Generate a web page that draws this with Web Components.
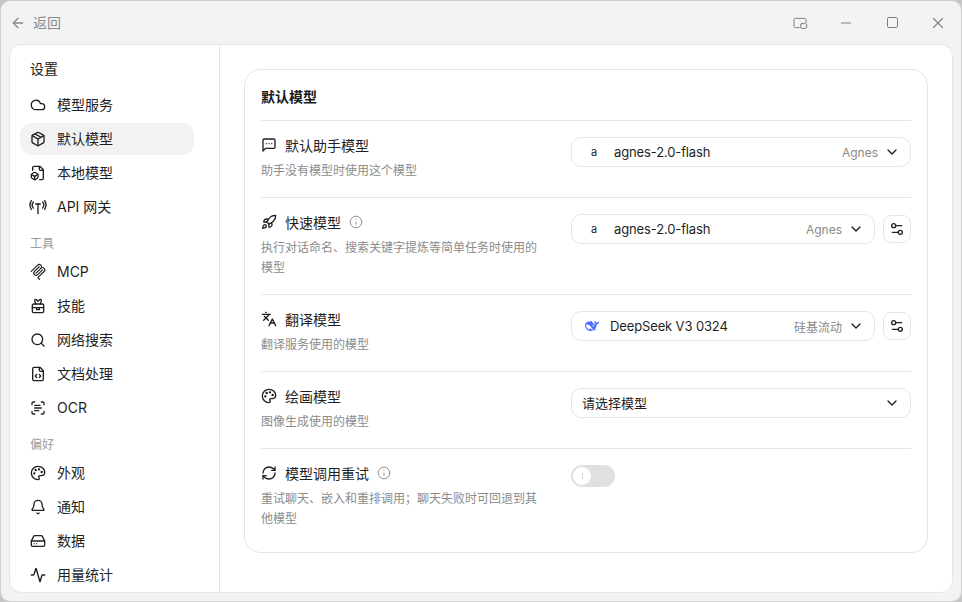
<!DOCTYPE html>
<html lang="zh"><head><meta charset="utf-8"><title>设置</title>
<style>
html,body{margin:0;height:100%;background:#c6c6c6;overflow:hidden}
body{font-family:Inter,"Noto Sans CJK SC",sans-serif;color:#1a1a1a;font-size:14px}
</style></head><body>
<app-window>
  <title-bar slot="title"></title-bar>
  <settings-nav slot="nav">
    <nav-heading first>设置</nav-heading>
    <nav-item icon="cloud">模型服务</nav-item>
    <nav-item icon="package" active>默认模型</nav-item>
    <nav-item icon="filebox">本地模型</nav-item>
    <nav-item icon="antenna">API 网关</nav-item>
    <nav-heading>工具</nav-heading>
    <nav-item icon="mcp">MCP</nav-item>
    <nav-item icon="skill">技能</nav-item>
    <nav-item icon="search">网络搜索</nav-item>
    <nav-item icon="filecode">文档处理</nav-item>
    <nav-item icon="scan">OCR</nav-item>
    <nav-heading>偏好</nav-heading>
    <nav-item icon="palette">外观</nav-item>
    <nav-item icon="bell">通知</nav-item>
    <nav-item icon="drive">数据</nav-item>
    <nav-item icon="activity">用量统计</nav-item>
  </settings-nav>
  <settings-card heading="默认模型">
    <setting-row icon="message" label="默认助手模型" desc="助手没有模型时使用这个模型">
      <model-select mark="a" model="agnes-2.0-flash" provider="Agnes"></model-select>
    </setting-row>
    <setting-row icon="rocket" label="快速模型" info desc="执行对话命名、搜索关键字提炼等简单任务时使用的模型">
      <model-select mark="a" model="agnes-2.0-flash" provider="Agnes"></model-select>
      <tune-button></tune-button>
    </setting-row>
    <setting-row icon="languages" label="翻译模型" desc="翻译服务使用的模型">
      <model-select mark="deepseek" model="DeepSeek V3 0324" provider="硅基流动"></model-select>
      <tune-button></tune-button>
    </setting-row>
    <setting-row icon="palette" label="绘画模型" desc="图像生成使用的模型">
      <model-select placeholder="请选择模型"></model-select>
    </setting-row>
    <setting-row icon="refresh" label="模型调用重试" info desc="重试聊天、嵌入和重排调用；聊天失败时可回退到其他模型">
      <toggle-switch></toggle-switch>
    </setting-row>
  </settings-card>
</app-window>
<script>
const ICONS={
cloud:'<path d="M17.5 19H9a7 7 0 1 1 6.71-9h1.79a4.5 4.5 0 1 1 0 9Z"/>',
package:'<path d="M21 8a2 2 0 0 0-1-1.73l-7-4a2 2 0 0 0-2 0l-7 4A2 2 0 0 0 3 8v8a2 2 0 0 0 1 1.73l7 4a2 2 0 0 0 2 0l7-4A2 2 0 0 0 21 16Z"/><path d="m3.3 7 8.7 5 8.7-5"/><path d="M12 22V12"/><path d="m7.5 4.27 9 5.15"/>',
filebox:'<path d="M14.5 22H18a2 2 0 0 0 2-2V7l-5-5H6a2 2 0 0 0-2 2v4"/><path d="M14 2v4a2 2 0 0 0 2 2h4"/><path d="M3 13.1a2 2 0 0 0-1 1.76v3.24a2 2 0 0 0 .97 1.78L6 21.7a2 2 0 0 0 2.03.01L11 19.9a2 2 0 0 0 1-1.76V14.9a2 2 0 0 0-.97-1.78L8 11.3a2 2 0 0 0-2.03-.01Z"/><path d="M7 17v5"/><path d="M11.7 14.2 7 17l-4.7-2.8"/>',
antenna:'<path d="M5 4.5C3 7 3 11 5 13.5"/><path d="M2 2.5C-.5 6.5-.5 11.500 2 15.500"/><path d="M19 4.500c2 2.500 2 6.500 0 9"/><path d="M22 2.500c2.500 4 2.500 9 0 13"/><path d="M8.500 7.500h7"/><path d="M12 7.500V22"/>',
skill:'<path d="M3.500 11a2 2 0 0 1 2-2h13a2 2 0 0 1 2 2v9a2 2 0 0 1-2 2h-13a2 2 0 0 1-2-2z"/><path d="M8.500 9 7 4a1.500 1.500 0 0 1 2.300-1.600L12 5l2.700-2.600A1.500 1.500 0 0 1 17 4l-1.500 5"/><path d="M3.500 14.500h17"/><path d="M10 14.500v3h4v-3"/>',
search:'<circle cx="11" cy="11" r="8"/><path d="m21 21-4.300-4.300"/>',
filecode:'<path d="M10 12.500 8 15l2 2.500"/><path d="m14 12.500 2 2.500-2 2.500"/><path d="M14 2v4a2 2 0 0 0 2 2h4"/><path d="M15 2H6a2 2 0 0 0-2 2v16a2 2 0 0 0 2 2h12a2 2 0 0 0 2-2V7z"/>',
scan:'<path d="M3 7V5a2 2 0 0 1 2-2h2"/><path d="M17 3h2a2 2 0 0 1 2 2v2"/><path d="M21 17v2a2 2 0 0 1-2 2h-2"/><path d="M7 21H5a2 2 0 0 1-2-2v-2"/><path d="M7 8h8"/><path d="M7 12h10"/><path d="M7 16h6"/>',
palette:'<path d="M12 22a1 1 0 0 1 0-20 10 9 0 0 1 10 9 5 5 0 0 1-5 5h-2.250a1.750 1.750 0 0 0-1.400 2.800l.3.4a1.750 1.750 0 0 1-1.400 2.800z"/><circle cx="13.500" cy="6.500" r=".8" fill="currentColor"/><circle cx="17.500" cy="10.500" r=".8" fill="currentColor"/><circle cx="6.500" cy="12.500" r=".8" fill="currentColor"/><circle cx="8.500" cy="7.500" r=".8" fill="currentColor"/>',
bell:'<path d="M10.268 21a2 2 0 0 0 3.464 0"/><path d="M3.262 15.326A1 1 0 0 0 4 17h16a1 1 0 0 0 .74-1.673C19.410 13.956 18 12.499 18 8A6 6 0 0 0 6 8c0 4.499-1.411 5.956-2.738 7.326"/>',
drive:'<path d="M22 12H2"/><path d="M5.450 5.110 2 12v6a2 2 0 0 0 2 2h16a2 2 0 0 0 2-2v-6l-3.450-6.890A2 2 0 0 0 16.760 4H7.240a2 2 0 0 0-1.790 1.110z"/><path d="M6 16h.01"/><path d="M10 16h.01"/>',
activity:'<path d="M22 12h-2.480a2 2 0 0 0-1.930 1.460l-2.350 8.360a.25.25 0 0 1-.48 0L9.240 2.180a.25.25 0 0 0-.48 0l-2.350 8.360A2 2 0 0 1 4.490 12H2"/>',
message:'<path d="M21 15a2 2 0 0 1-2 2H7l-4 4V5a2 2 0 0 1 2-2h14a2 2 0 0 1 2 2z"/><path d="M8 10h.01"/><path d="M12 10h.01"/><path d="M16 10h.01"/>',
rocket:'<path d="M4.500 16.500c-1.500 1.260-2 5-2 5s3.740-.5 5-2c.71-.84.7-2.130-.09-2.910a2.180 2.180 0 0 0-2.910-.09z"/><path d="m12 15-3-3a22 22 0 0 1 2-3.950A12.880 12.880 0 0 1 22 2c0 2.720-.78 7.500-6 11a22.350 22.350 0 0 1-4 2z"/><path d="M9 12H4s.55-3.030 2-4c1.620-1.080 5 0 5 0"/><path d="M12 15v5s3.030-.55 4-2c1.080-1.620 0-5 0-5"/>',
languages:'<path d="m5 8 6 6"/><path d="m4 14 6-6 2-3"/><path d="M2 5h12"/><path d="M7 2h1"/><path d="m22 22-5-10-5 10"/><path d="M14 18h6"/>',
refresh:'<path d="M3 12a9 9 0 0 1 9-9 9.750 9.750 0 0 1 6.740 2.740L21 8"/><path d="M21 3v5h-5"/><path d="M21 12a9 9 0 0 1-9 9 9.750 9.750 0 0 1-6.740-2.740L3 16"/><path d="M8 16H3v5"/>',
info:'<circle cx="12" cy="12" r="10"/><path d="M12 16v-4"/><path d="M12 8h.01"/>',
chevron:'<path d="m6 9 6 6 6-6"/>',
tune:'<path d="M14 17H5"/><path d="M19 7h-9"/><circle cx="17" cy="17" r="3"/><circle cx="7" cy="7" r="3"/>',
back:'<path d="m12 19-7-7 7-7"/><path d="M19 12H5"/>',
pip:'<path d="M21 11V7a2 2 0 0 0-2-2H5a2 2 0 0 0-2 2v10a2 2 0 0 0 2 2h6"/><rect x="13" y="13" width="9" height="7" rx="1.500"/>',
min:'<path d="M5 12h14"/>',
max:'<rect x="4" y="4" width="16" height="16" rx="2"/>',
close:'<path d="M18 6 6 18"/><path d="m6 6 12 12"/>'
};
const FILLED={
mcp:'<path d="M15.688 2.343a2.588 2.588 0 00-3.61 0l-9.626 9.44a.863.863 0 01-1.203 0 .823.823 0 010-1.18l9.626-9.44a4.313 4.313 0 016.016 0 4.116 4.116 0 011.204 3.54 4.3 4.3 0 013.609 1.18l.05.05a4.115 4.115 0 010 5.9l-8.706 8.537a.274.274 0 000 .393l1.788 1.754a.823.823 0 010 1.18.863.863 0 01-1.203 0l-1.788-1.753a1.92 1.92 0 010-2.754l8.706-8.538a2.47 2.47 0 000-3.54l-.05-.049a2.588 2.588 0 00-3.607-.003l-7.172 7.034-.002.002-.098.097a.863.863 0 01-1.204 0 .823.823 0 010-1.18l7.273-7.133a2.47 2.47 0 00-.003-3.537z"/><path d="M14.485 4.703a.823.823 0 000-1.18.863.863 0 00-1.204 0l-7.119 6.982a4.115 4.115 0 000 5.9 4.314 4.314 0 006.016 0l7.12-6.982a.823.823 0 000-1.18.863.863 0 00-1.204 0l-7.119 6.982a2.588 2.588 0 01-3.61 0 2.47 2.47 0 010-3.54l7.12-6.982z"/>',
deepseek:'<path d="M23.748 4.482c-.254-.124-.364.113-.512.234-.051.039-.094.09-.137.136-.372.397-.806.657-1.373.626-.829-.046-1.537.214-2.163.848-.133-.782-.575-1.248-1.247-1.548-.352-.156-.708-.311-.955-.65-.172-.241-.219-.51-.305-.774-.055-.16-.11-.323-.293-.35-.2-.031-.278.136-.356.276-.313.572-.434 1.202-.422 1.84.027 1.436.633 2.58 1.838 3.393.137.093.172.187.129.323-.082.28-.18.552-.266.833-.055.179-.137.217-.329.14a5.526 5.526 0 01-1.736-1.18c-.857-.828-1.631-1.742-2.597-2.458a11.365 11.365 0 00-.689-.471c-.985-.957.13-1.743.388-1.836.27-.098.093-.432-.779-.428-.872.004-1.67.295-2.687.684a3.055 3.055 0 01-.465.137 9.597 9.597 0 00-2.883-.102c-1.885.21-3.39 1.102-4.497 2.623C.082 8.606-.231 10.684.152 12.85c.403 2.284 1.569 4.175 3.36 5.653 1.858 1.533 3.997 2.284 6.438 2.14 1.482-.085 3.133-.284 4.994-1.86.47.234.962.327 1.78.397.63.059 1.236-.03 1.705-.128.735-.156.684-.837.419-.961-2.155-1.004-1.682-.595-2.113-.926 1.096-1.296 2.746-2.642 3.392-7.003.05-.347.007-.565 0-.845-.004-.17.035-.237.23-.256a4.173 4.173 0 001.545-.475c1.396-.763 1.96-2.015 2.093-3.517.02-.23-.004-.467-.247-.588zM11.581 18c-2.089-1.642-3.102-2.183-3.52-2.16-.392.024-.321.471-.235.763.09.288.207.486.371.739.114.167.192.416-.113.603-.673.416-1.842-.14-1.897-.167-1.361-.802-2.5-1.86-3.301-3.307-.774-1.393-1.224-2.887-1.298-4.482-.02-.386.093-.522.477-.592a4.696 4.696 0 011.529-.039c2.132.312 3.946 1.265 5.468 2.774.868.86 1.525 1.887 2.202 2.891.72 1.066 1.494 2.082 2.48 2.914.348.292.625.514.891.677-.802.09-2.14.11-3.054-.614zm1-6.44a.306.306 0 01.415-.287.302.302 0 01.2.288.306.306 0 01-.31.307.303.303 0 01-.304-.308zm3.11 1.596c-.2.081-.399.151-.59.16a1.245 1.245 0 01-.798-.254c-.274-.23-.47-.358-.552-.758a1.73 1.73 0 01.016-.588c.07-.327-.008-.537-.239-.727-.187-.156-.426-.199-.688-.199a.559.559 0 01-.254-.078c-.11-.054-.2-.19-.114-.358.028-.054.16-.186.192-.21.356-.202.767-.136 1.146.016.352.144.618.408 1.001.782.391.451.462.576.685.914.176.265.336.537.445.848.067.195-.019.354-.25.452z"/>'
};
function define(name,render){
  customElements.define(name,class extends HTMLElement{
    connectedCallback(){
      if(this.shadowRoot)return;
      this.attachShadow({mode:'open'}).innerHTML=render(this);
    }
  });
}
define('ui-icon',el=>{
  const n=el.getAttribute('name');
  const s=el.getAttribute('size')||16, w=el.getAttribute('stroke')||2;
  const body=FILLED[n]?`<svg viewBox="0 0 24 24" fill="currentColor">${FILLED[n]}</svg>`:
   `<svg viewBox="0 0 24 24" fill="none" stroke="currentColor" stroke-width="${w}" stroke-linecap="round" stroke-linejoin="round">${ICONS[n]}</svg>`;
  return `<style>:host{display:inline-flex;flex:none;width:${s}px;height:${s}px}svg{width:100%;height:100%;display:block;overflow:visible}</style>${body}`;
});
define('app-window',()=>`<style>
:host{display:flex;flex-direction:column;box-sizing:border-box;width:960px;height:600px;margin:1px 0 0 1px;background:#f3f3f3;border-radius:9px;box-shadow:0 0 0 1px #d0d0d0;overflow:hidden}
.panel{flex:1;min-height:0;display:flex;margin:0 8px 8px;background:#fff;border:1px solid #e6e6e6;border-radius:12px;overflow:hidden;box-sizing:border-box}
</style><slot name="title"></slot><div class="panel"><slot name="nav"></slot><slot></slot></div>`);
define('title-bar',()=>`<style>
:host{display:flex;align-items:center;height:43px;flex:none;padding:0 0 0 9px;color:#8a8a8a;font-size:14px}
.back{display:flex;align-items:center;gap:7px;flex:1}
.back b{font-weight:400;padding-bottom:2px}
.btns{display:flex;align-items:center;color:#808080}
.btns span{display:flex;justify-content:center;width:46px}
</style><div class="back"><ui-icon name="back" size="16" stroke="2"></ui-icon><b>返回</b></div>
<div class="btns"><span><ui-icon name="pip" size="16" stroke="1.500"></ui-icon></span><span><ui-icon name="min" size="16" stroke="1.600"></ui-icon></span><span><ui-icon name="max" size="15" stroke="1.600"></ui-icon></span><span><ui-icon name="close" size="18" stroke="1.500"></ui-icon></span></div>`);
define('settings-nav',()=>`<style>
:host{display:flex;flex-direction:column;gap:2px;box-sizing:border-box;width:210px;flex:none;border-right:1px solid #e6e6e6;padding:11px 25px 0 10px;overflow:hidden}
</style><slot></slot>`);
define('nav-heading',el=>{const f=el.hasAttribute('first');return `<style>
:host{display:flex;align-items:center;flex:none;box-sizing:border-box;height:${f?'24px':'22px'};margin:${f?'0 0 7px':'6px 0 1px'};padding-left:10px;font-size:${f?'14px':'12px'};color:${f?'#1a1a1a':'#9a9a9a'}}
</style><slot></slot>`});
define('nav-item',el=>`<style>
:host{display:flex;align-items:center;gap:11px;flex:none;height:32px;padding-left:10px;border-radius:12px;font-size:14px;color:#1f1f1f;background:${el.hasAttribute('active')?'#f2f2f2':'transparent'}}
span{padding-bottom:2px}
</style><ui-icon name="${el.getAttribute('icon')}" size="16" stroke="2"></ui-icon><span><slot></slot></span>`);
define('settings-card',el=>`<style>
:host{display:block;flex:1;min-width:0;margin:24px 24px 0;align-self:flex-start;box-sizing:border-box;background:#fff;border:1px solid #e6e6e6;border-radius:16px;padding:16px 16px 0}
h2{margin:0;height:34px;line-height:22px;font-size:14px;font-weight:700;color:#1a1a1a;border-bottom:1px solid #e6e6e6}
</style><h2>${el.getAttribute('heading')}</h2><slot></slot>`);
define('setting-row',el=>`<style>
:host{display:grid;grid-template-columns:280px 340px;column-gap:30px;align-items:start;padding:16px 0;border-bottom:1px solid #e6e6e6}
:host(:last-child){border-bottom:0;padding-bottom:23px}
.t{display:flex;align-items:center;gap:8px;height:16px;font-size:14px;color:#1f1f1f;margin-bottom:8px}
.i{color:#8a8a8a;display:inline-flex}
.d{font-size:12px;line-height:20px;color:#8c8c8c}
.c{display:flex;align-items:flex-start;gap:8px}
</style><div><div class="t"><ui-icon name="${el.getAttribute('icon')}" size="16" stroke="2"></ui-icon><span>${el.getAttribute('label')}</span>${el.hasAttribute('info')?'<span class="i"><ui-icon name="info" size="14" stroke="1.600"></ui-icon></span>':''}</div><div class="d">${el.getAttribute('desc')}</div></div><div class="c"><slot></slot></div>`);
define('model-select',el=>{
  const mark=el.getAttribute('mark'),ph=el.getAttribute('placeholder');
  const icon=mark==='deepseek'?'<span class="m ds"><ui-icon name="deepseek" size="14"></ui-icon></span>':mark?`<span class="m">${mark}</span>`:'';
  return `<style>
:host{display:flex;flex:1;min-width:0;box-sizing:border-box;align-items:center;height:30px;border:1px solid #e6e6e6;border-radius:10px;padding:0 10px;font-size:13px;color:#1f1f1f;background:#fff}
.m{width:22px;text-align:center;font-size:11px;margin:0 9px 0 1px;display:inline-flex;justify-content:center;color:#222}
.ds{color:#4d6bfe;width:16px;margin:0 10px 0 2px}
.n{flex:1;letter-spacing:-.13px}.n.ph{letter-spacing:0;padding-bottom:2px}.p{color:#8a8a8a;font-size:12px;margin-right:6px}
</style>${icon}<span class="n${ph?' ph':''}">${ph||el.getAttribute('model')}</span>${el.getAttribute('provider')?`<span class="p">${el.getAttribute('provider')}</span>`:''}<ui-icon name="chevron" size="16" stroke="2"></ui-icon>`;
});
define('tune-button',()=>`<style>
:host{display:flex;align-items:center;justify-content:center;flex:none;box-sizing:border-box;width:28px;height:28px;margin-top:1px;border:1px solid #e6e6e6;border-radius:8px;color:#222}
</style><ui-icon name="tune" size="16" stroke="2"></ui-icon>`);
define('toggle-switch',()=>`<style>
:host{display:block;position:relative;width:44px;height:22px;border-radius:11px;background:#e0e0e2}
.k{position:absolute;left:2px;top:2px;width:18px;height:18px;border-radius:50%;background:#fff;display:flex;align-items:center;justify-content:center}
.k i{display:block;width:1px;height:6px;background:#d0d0d0}
</style><span class="k"><i></i></span>`);
</script>
</body></html>
